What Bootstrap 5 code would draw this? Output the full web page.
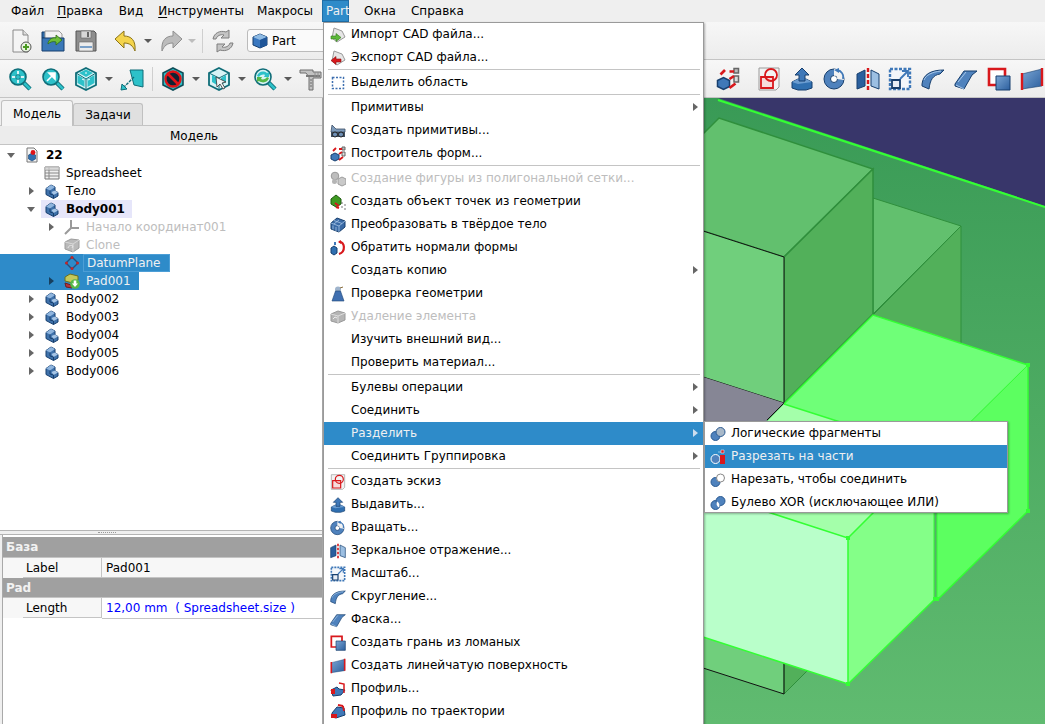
<!DOCTYPE html>
<html lang="ru"><head><meta charset="utf-8"><title>FreeCAD</title>
<link href="https://cdn.jsdelivr.net/npm/bootstrap@5.3.0/dist/css/bootstrap.min.css" rel="stylesheet">
<style>
html,body{height:100%;}
body{width:1045px;height:724px;overflow:hidden;background:#efefef;font:12px/1 "DejaVu Sans",sans-serif;color:#000;}
.defs-holder{position:absolute;width:0;height:0;}
.qbar{height:22px;background:#efefef;padding-left:3px;}
.qbar-it{height:22px;padding:0 8px;line-height:23px;white-space:nowrap;}
.qbar-it u{text-underline-offset:2px;}
.qb-a{padding-left:5px;}.qb-b{padding-right:7px;}.qb-c{padding-left:5px;}
.qbar-on{background:#2e8bc9;color:#eff0f1;border:1px solid #1f6fa8;padding:0 3px;line-height:21px;margin-left:1px;width:27px;}
.qb-d{padding-left:15px;}.qb-e{padding-left:7px;}
.qtools{height:38px;background:linear-gradient(#f7f7f7,#ececec);border-bottom:1px solid #c4c4c4;}
.t1{padding-left:8px;}
.t2{padding-left:4px;}
.tbi{width:32px;height:26px;display:flex;align-items:center;justify-content:center;flex:none;}
.tbs{width:26px;}
.tbr{width:32.8px;}
.tbi svg{width:24px;height:24px;}
.ddm{width:14px;display:flex;justify-content:center;flex:none;}
.ddm::after{content:"";border:4px solid transparent;border-top:4px solid #5a5a5a;border-bottom:0;}
.ddm-off::after{border-top-color:#bdbdbd;}
.tsep{width:1px;height:24px;background:#cfcfcf;margin:0 4px;flex:none;}
.tsep-a{margin:0 3px;}
.ml1{margin-left:1px}.ml2{margin-left:2px}.ml3{margin-left:3px}.ml4{margin-left:4px}.ml6{margin-left:6px}.ml7{margin-left:7px}.ml14{margin-left:14px}
.combo{height:23px;width:90px;margin-left:11px;border:1px solid #bbb;border-radius:3px;background:#fafafa;padding-left:4px;gap:4px;font-size:12px;flex:none;}
.combo svg{width:16px;height:16px;}
.rgroup{margin-right:-3px;}
.rfirst{margin-right:8px;}
.stage{height:626px;}
.lpanel{width:323px;flex:none;background:#efefef;border-right:1px solid #a9a9a9;}
.qtabs{height:28px;padding:2px 0 0 1px;border-bottom:1px solid #c4c4c4;}
.qtab{padding:0 11px;background:#e0e0e0;border:1px solid #c0c0c0;border-bottom:0;border-radius:3px 3px 0 0;margin-top:3px;height:22px;line-height:23px;}
.qtab-on{background:#f4f4f4;margin-top:0;height:26px;line-height:27px;margin-bottom:-1px;}
.qhead{height:19px;line-height:20px;padding-left:170px;background:#ececec;border-bottom:1px solid #c4c4c4;}
.qtree{height:385px;background:#fff;padding-top:1px;}
.trow{height:18px;width:fit-content;}
.lv0{padding-left:5px}.lv1{padding-left:25px}.lv2{padding-left:45px}
.tw{width:12px;display:flex;justify-content:center;flex:none;}
.tw-r::after{content:"";border:4px solid transparent;border-left:5px solid #666;border-right:0;}
.tw-d::after{content:"";border:4px solid transparent;border-top:5px solid #666;border-bottom:0;margin-top:1px;}
.tic{width:16px;height:16px;flex:none;margin-left:7px;}
.ttx{margin-left:6px;white-space:nowrap;}
.tb0{font-weight:700;}
.tgrey{color:#bdbdbd;}
.tsel{background:#2e8bc9;color:#eff0f1;margin-left:0;}
.tsel .tw-r::after{border-left-color:#173f5e;}
.tsel1{padding-left:45px;}
.tsel .ttx{margin-left:3px;padding:0 8px 0 3px;height:18px;line-height:17px;}
.tsel .ttx-box{border:1px solid #4c9ed6;background:#2e8bc9;}
.tsel .ttx-pad{padding-right:8px;line-height:18px;}
.tact{background:#e6e6fa;margin-left:-3px;padding:0 7px 0 3px;height:18px;}
.tact .tic{margin-left:0}
.qsplit{height:5px;background:#efefef;border-top:1px solid #b4b4b4;border-bottom:1px solid #b4b4b4;}
.qdots{width:18px;border-top:1px dotted #999;margin-left:-108px;}
.qprops{flex:1;background:#fff;border-left:1px solid #a9a9a9;margin-left:2px;padding-top:2px;}
.ptb{width:100%;table-layout:fixed;border-collapse:collapse;}
.ptb td{padding:2px 0 0;height:20px;line-height:17px;}
.ptb td.pk{padding:0;}
.pcol1{width:99px;}
.pgrp{background:#a0a0a0;color:#f2f2f2;font-weight:700;padding-left:3px!important;border-bottom:1px solid #c4c4c4;}
.pk{background:#f7f7f7;}
.pk div{margin-left:20px;height:20px;line-height:21px;padding-left:3px;border-bottom:1px solid #c4c4c4;border-right:1px solid #c4c4c4;background:#f7f7f7;overflow:hidden;}
.pv{background:#f7f7f7;padding-left:4px!important;border-bottom:1px solid #c4c4c4;white-space:nowrap;}
.pv2{background:#fff;color:#0000ff;}
.view3d{flex:1;background:#38366a;min-width:0;}
.view3d svg{display:block;width:722px;height:626px;}
.qmenu{display:block;position:absolute;margin:0;padding:0;border:1px solid #9a9a9a;border-radius:0;background:#fff;font-size:12px;color:#000;min-width:0;box-shadow:1px 1px 2px rgba(0,0,0,.3);}
.qm1{left:323px;top:22px;width:381px;height:704px;}
.qm2{left:704px;top:421px;width:304px;height:92px;}
.qit{display:flex;align-items:center;height:23px;padding:0 0 0 6px;color:#000;white-space:nowrap;position:relative;background:none;text-decoration:none;}
.qit svg{width:16px;height:16px;flex:none;margin-right:5px;}
.qit .noi{width:16px;flex:none;margin-right:5px;}
.qit .qtxt{line-height:23px;}
.qit.sub::after{content:"";position:absolute;right:5px;top:7px;border:4px solid transparent;border-left:5px solid #666;border-right:0;}
.qit.on,.qit.on:hover{background:#2e8bc9;color:#eff0f1;}
.qit.on::after{border-left-color:#cde;}
.qit.off{color:#bdbdbd;}
.qm2 .qit{padding-left:5px;}
.qdiv{height:2px;margin:0 3px 0 4px;border-top:1px solid #c4c4c4;opacity:1;background:#fff;}
</style></head><body>
<svg class="defs-holder" aria-hidden="true"><defs>
<linearGradient id="plane" x1="0" y1="0" x2="0" y2="1"><stop offset="0" stop-color="#399a56"/><stop offset=".5" stop-color="#4dab62"/><stop offset="1" stop-color="#60bb70"/></linearGradient>
<linearGradient id="blu" x1="0" y1="0" x2="1" y2="1"><stop offset="0" stop-color="#7ba6d4"/><stop offset="1" stop-color="#2c5f9e"/></linearGradient>
<symbol id="new" viewBox="0 0 24 24"><path d="M4 1h10l5 5v17H4z" fill="#f4f4f4" stroke="#8a8a8a"/><path d="M14 1v5h5" fill="#ddd" stroke="#8a8a8a"/><circle cx="17" cy="18" r="5" fill="#e8f3e0" stroke="#555"/><path d="M17 15v6M14 18h6" stroke="#4a9a22" stroke-width="2"/></symbol>
<symbol id="open" viewBox="0 0 24 24"><path d="M1 3h8l2 2h8v4H1z" fill="#2d6aa8" stroke="#173f6e"/><path d="M4 2h14l3 3v8H4z" fill="#f2f2f2" stroke="#999"/><path d="M1 9h22v13H1z" fill="#3a78b8" stroke="#173f6e"/><path d="M7 15c0-4 4-7 8-6V6l6 5-6 5v-3c-3-1-6 0-8 2z" fill="#6fbf3a" stroke="#2f6f12" stroke-width=".8"/></symbol>
<symbol id="save" viewBox="0 0 24 24"><path d="M2 2h18l2 2v18H2z" fill="#8e8e8e" stroke="#555"/><path d="M7 2h10v7H7z" fill="#d8d8d8" stroke="#666" stroke-width=".6"/><path d="M13 3h2v5h-2z" fill="#666"/><path d="M5 13h14v9H5z" fill="#ececec" stroke="#666" stroke-width=".6"/><path d="M6 17h12v2H6z" fill="#7aa0c8"/></symbol>
<symbol id="undo" viewBox="0 0 24 24"><path d="M1 10 10 2v5c7 0 12 4 11 15-2-5-5-8-11-8v5z" fill="#f4d44c" stroke="#8a7318"/></symbol>
<symbol id="redo" viewBox="0 0 24 24"><path d="M23 10 14 2v5C7 7 2 11 3 22c2-5 5-8 11-8v5z" fill="#bcbcbc" stroke="#8f8f8f"/></symbol>
<symbol id="refr" viewBox="0 0 24 24"><path d="M2 10C3 4 9 1 15 3l3-2v8h-8l3-3C9 5 6 7 5 10z" fill="#c4c4c4" stroke="#7f7f7f"/><path d="M22 14c-1 6-7 9-13 7l-3 2v-8h8l-3 3c4 1 7-1 8-4z" fill="#c4c4c4" stroke="#7f7f7f"/></symbol>
<symbol id="fita" viewBox="0 0 24 24"><path d="M15 15l7 7" stroke="#0f6d78" stroke-width="4.5"/><path d="M15 15l7 7" stroke="#2dc1c9" stroke-width="2.5"/><circle cx="10" cy="10" r="8" fill="#2dc1c9" stroke="#0f6d78" stroke-width="1.6"/><path d="M10 4v12M4 10h12" stroke="#d8f4f6" stroke-width="2"/><circle cx="10" cy="10" r="2.4" fill="#2dc1c9" stroke="#0f6d78" stroke-width=".8"/></symbol>
<symbol id="fits" viewBox="0 0 24 24"><path d="M15 15l7 7" stroke="#0f6d78" stroke-width="4.5"/><path d="M15 15l7 7" stroke="#2dc1c9" stroke-width="2.5"/><circle cx="10" cy="10" r="8" fill="#2dc1c9" stroke="#0f6d78" stroke-width="1.6"/><path d="M6 14l6-6M8 6h6v6z" stroke="#fff" fill="#fff" stroke-width="1.6"/></symbol>
<symbol id="cube" viewBox="0 0 24 24"><path d="M12 1l10 5v12l-10 5-10-5V6z" fill="#d8f4f6" stroke="#0f6d78" stroke-width="1.8"/><path d="M2 6l10 6 10-6M12 12v11" stroke="#0f6d78" stroke-width="1" fill="none"/><path d="M12 2.500l-7 3.500 7 4 7-4zM3.500 8l7 4v8l-7-4zM20.500 8l-7 4v8l7-4z" fill="#2dc1c9"/><path d="M12 5v2M8 12l2 1M16 12l-2 1" stroke="#fff"/></symbol>
<symbol id="pln" viewBox="0 0 24 24"><path d="M10 3h13v17l-9-2z" fill="#2dc1c9" stroke="#0f6d78"/><path d="M14 10L3 21" stroke="#0f6d78" stroke-width="1.4" stroke-dasharray="3 1"/><path d="M1 23l1-6 5 5z" fill="#2dc1c9" stroke="#0f6d78"/></symbol>
<symbol id="noen" viewBox="0 0 24 24"><path d="M12 1l10 5v12l-10 5-10-5V6z" fill="#2dc1c9" stroke="#0f4d58" stroke-width="1.6"/><circle cx="12" cy="12" r="7.5" fill="#123" stroke="#e01418" stroke-width="2.4"/><path d="M7 7l10 10" stroke="#e01418" stroke-width="2.6"/></symbol>
<symbol id="boxs" viewBox="0 0 24 24"><path d="M12 1l10 5v12l-10 5-10-5V6z" fill="#d8f4f6" stroke="#0f6d78" stroke-width="1.8"/><path d="M2 6l10 5 10-5M12 11v12" stroke="#0f6d78" fill="none"/><path d="M5 8l5 3v7l-5-3zM19 8l-5 3v7l5-3z" fill="#2dc1c9"/><path d="M9 10l10 5-4 1 3 5-2 1-3-5-3 3z" fill="#f0f4f4" stroke="#333" stroke-width=".8"/></symbol>
<symbol id="sync" viewBox="0 0 24 24"><path d="M15 15l7 7" stroke="#0f6d78" stroke-width="4.5"/><path d="M15 15l7 7" stroke="#2dc1c9" stroke-width="2.5"/><circle cx="10" cy="10" r="8" fill="#d8f4f6" stroke="#0f6d78" stroke-width="1.6"/><path d="M4 9c1-4 6-6 10-3l2-1v5h-5l1-2c-2-1-5 0-6 2z" fill="#2dc1c9"/><path d="M16 11c-1 4-6 6-10 3l-2 1v-5h5l-1 2c2 1 5 0 6-2z" fill="#55b848"/></symbol>
<symbol id="calip" viewBox="0 0 24 24"><path d="M1 3h13v2h8v6h-8v12h-4V10L7 6H1z" fill="#c2c2c2" stroke="#6e6e6e"/><path d="M7 9h14" stroke="#7a7a7a" stroke-width="2"/><path d="M11 13h2M11 16h2M11 19h2" stroke="#6e6e6e"/><path d="M16 5v6M19 5v6" stroke="#8e8e8e"/></symbol>
<symbol id="part" viewBox="0 0 16 16"><path d="M1 4l7-3 7 3v8l-7 3-7-3z" fill="#3a78c0" stroke="#173f6e"/><path d="M1 4l7 3 7-3-7-3z" fill="#8fbbe4"/><path d="M8 7v8l7-3V4z" fill="#1f5598"/></symbol>
<symbol id="doc" viewBox="0 0 16 16"><path d="M3 1h7l3 3v11H3z" fill="#f6f6f6" stroke="#777"/><path d="M4.500 8l3.500-2 3.500 2v4l-3.500 2-3.500-2z" fill="#2f6fb0" stroke="#173f6e" stroke-width=".6"/><circle cx="9" cy="5.500" r="2.400" fill="#e01418"/></symbol>
<symbol id="sheet" viewBox="0 0 16 16"><path d="M1 2h14v12H1z" fill="#f0f0f0" stroke="#777"/><path d="M1 5h14M1 8h14M1 11h14M5 2v12" stroke="#888"/><path d="M1 2h14v3H1z" fill="#cfcfcf" opacity=".7"/></symbol>
<symbol id="body" viewBox="0 0 16 16"><path d="M2 5.500 7 2l4 2v4l3 1.500V13l-4.500 2.500L2 11.500z" fill="#3f72ab" stroke="#173f6e"/><path d="M2 5.500 7 2l4 2-5 3.500z" fill="#8fb5de"/><path d="M7.500 9 11 7.500l3 2-4.500 2.500z" fill="#a6c5e6"/><path d="M6 7.500v3.500l3.500 1v3.500" stroke="#173f6e" fill="none"/></symbol>
<symbol id="orig" viewBox="0 0 16 16"><path d="M7 1v8l-6 6M7 9h8" stroke="#9a9a9a" stroke-width="2" fill="none"/></symbol>
<symbol id="clone" viewBox="0 0 16 16"><path d="M1 5l6-3 8 1v8l-6 4-8-3z" fill="#b9b9b9" stroke="#9c9c9c"/><path d="M1 5l8 2 6-4M9 7v8" stroke="#d8d8d8" fill="none"/><path d="M4 11c1-3 3-3 5-2l-1 2" stroke="#e6e6e6" fill="none"/></symbol>
<symbol id="dplane" viewBox="0 0 16 16"><path d="M8 2l6 6-6 6-6-6z" fill="none" stroke="#26507e" stroke-width="1.400"/><g fill="#c0262a"><circle cx="8" cy="2.500" r="1.500"/><circle cx="13.500" cy="8" r="1.500"/><circle cx="8" cy="13.500" r="1.500"/><circle cx="2.500" cy="8" r="1.500"/></g></symbol>
<symbol id="pad" viewBox="0 0 16 16"><path d="M1 4l5-3 8 2v4l-5 3-8-2z" fill="#c5c95a" stroke="#6a7020"/><path d="M1 10l6 2 1 3-6-1z" fill="#b7333a" stroke="#6e1d20"/><circle cx="11" cy="11" r="4.800" fill="#55b848"/><path d="M9.700 7.500h2.600v3h1.800L11 14l-3.100-3.500h1.800z" fill="#fff"/></symbol>
<symbol id="imp" viewBox="0 0 16 16"><path d="M4 1l8 3 3 6-8 5-5-4z" fill="#e6e6e6" stroke="#9a9a9a"/><path d="M1 9h5V6.500l5 4-5 4V12H1z" fill="#5cb83a" stroke="#2f7a15" stroke-width=".6"/></symbol>
<symbol id="exp" viewBox="0 0 16 16"><path d="M4 1l8 3 3 6-8 5-5-4z" fill="#e6e6e6" stroke="#9a9a9a"/><path d="M11 9H6V6.500l-5 4 5 4V12h5z" fill="#d8181c" stroke="#8a1012" stroke-width=".6"/></symbol>
<symbol id="bsel" viewBox="0 0 16 16"><path d="M2.500 2.500h11v11h-11z" fill="none" stroke="#3e6fb0" stroke-width="1.500" stroke-dasharray="2 1.500"/></symbol>
<symbol id="prim" viewBox="0 0 16 16"><path d="M2 2l4 4h9v3H1z" fill="#7c9abb" stroke="#3c4e66" stroke-width=".8"/><path d="M1 9h14v5H1z" fill="#3e4e60"/><circle cx="5" cy="11.500" r="2.500" fill="#6e8fb5" stroke="#222"/><circle cx="11" cy="11.500" r="2.500" fill="#6e8fb5" stroke="#222"/></symbol>
<symbol id="shape" viewBox="0 0 16 16"><path d="M1 9l4-2 4 2v4l-4 2-4-2z" fill="#3f78b8" stroke="#173f6e"/><path d="M12 6h3v4h-3z" fill="#ddd" stroke="#666"/><path d="M12 1h3v3h-3z" fill="#bbb" stroke="#666"/><path d="M3 5l3-3M9 3h3M9 8l3-2" stroke="#d8181c" stroke-width="1.800"/><path d="M9 14l4-3" stroke="#d8181c" stroke-width="1.800"/></symbol>
<symbol id="mesh" viewBox="0 0 16 16"><circle cx="5" cy="5" r="3.800" fill="#bdbdbd" stroke="#999"/><path d="M8 8l4-2 4 2v5l-4 2-4-2z" fill="#c9c9c9" stroke="#9c9c9c"/><circle cx="4.500" cy="10.500" r="2.500" fill="#b5b5b5"/></symbol>
<symbol id="pts" viewBox="0 0 16 16"><path d="M1 5l5-4 5 4v5l-5 3-5-3z" fill="#3f9a22" stroke="#1f5a10"/><path d="M5 9l4 3M9 14l-3-1" stroke="#d8181c" stroke-width="2"/><g fill="#666"><circle cx="12" cy="9" r=".8"/><circle cx="15" cy="11" r=".8"/><circle cx="12" cy="13" r=".8"/><circle cx="15" cy="15" r=".8"/></g></symbol>
<symbol id="solid" viewBox="0 0 16 16"><path d="M1 6l6-5 8 3v6l-6 5-8-3z" fill="#3a6aa6" stroke="#173f6e"/><path d="M1 6l8 3 6-5M9 9v6M4 3.500l8 3M3 8.500v4M6 10v4M4 7l5-4" stroke="#a7c5e6" stroke-width=".8" fill="none"/></symbol>
<symbol id="rev" viewBox="0 0 16 16"><path d="M1 8l3-2 3 2v5l-3 2-3-2z" fill="#2f6fb0" stroke="#173f6e"/><path d="M4 2h2v3H4z" fill="#3f78b8"/><path d="M9 2c6-1 7 10 0 12" fill="none" stroke="#d8181c" stroke-width="2.200"/><path d="M11 0l-3 2 3 2z" fill="#d8181c"/></symbol>
<symbol id="chk" viewBox="0 0 16 16"><circle cx="8" cy="3.500" r="3" fill="#9fb4cc"/><path d="M5.500 5h5L14 15H2z" fill="#3f6fb0" stroke="#1d4577" stroke-width=".6"/><path d="M10 2l3-1" stroke="#8a6d3b"/></symbol>
<symbol id="del" viewBox="0 0 16 16"><path d="M1 5l7-3 7 2v7l-7 3-7-2z" fill="#b5b5b5" stroke="#999"/><path d="M1 5l7 2 7-3M8 7v7" stroke="#ddd" fill="none"/><path d="M3 10l2-2 2 1" stroke="#eee" fill="none"/></symbol>
<symbol id="sk" viewBox="0 0 24 24"><path d="M2 1h20v19l-3 3H2z" fill="#f3f3f3" stroke="#9a9a9a"/><path d="M4 10h12v11H4z" fill="#f7dcdc" stroke="#d8181c" stroke-width="1.800"/><circle cx="14" cy="8" r="6" fill="none" stroke="#d8181c" stroke-width="1.800"/></symbol>
<symbol id="ext" viewBox="0 0 24 24"><path d="M2 15l6-3h8l6 3v6l-6 2H8l-6-2z" fill="#2f6fb0" stroke="#173f6e"/><path d="M2 15l6 2 14-2-6-3H8z" fill="#6b9cd0"/><path d="M12 1l7 7h-4v6H9V8H5z" fill="#3f78b8" stroke="#173f6e"/></symbol>
<symbol id="rvl" viewBox="0 0 24 24"><circle cx="11" cy="12" r="10" fill="#4f82bd" stroke="#173f6e"/><circle cx="11" cy="12" r="3.500" fill="#fff" stroke="#173f6e"/><path d="M11 2c6 0 11 4 10 11l-7-1c1-2-1-4-3-3z" fill="#f2f2f2"/><path d="M14 3c5 1 7 5 6 9" fill="none" stroke="#3f78b8" stroke-width="1.800"/><path d="M11 3l5-2v5z" fill="#3f78b8"/></symbol>
<symbol id="mir" viewBox="0 0 24 24"><path d="M1 7l8-4v16l-8 3z" fill="#2a5f9e" stroke="#173f6e"/><path d="M23 7l-8-4v16l8 3z" fill="#9cbfe2" stroke="#173f6e"/><path d="M12 1v22" stroke="#d8181c" stroke-width="2.400" stroke-dasharray="4 2"/></symbol>
<symbol id="scl" viewBox="0 0 24 24"><path d="M2 2h20v20H2z" fill="#f3f6fa" stroke="#3f78b8" stroke-width="2.400" stroke-dasharray="3 1.500"/><path d="M4 13h8v8H4z" fill="#e8eef6" stroke="#173f6e" stroke-width="1.800"/><path d="M12 12l7-7M14 4h6v6" fill="none" stroke="#3f78b8" stroke-width="1.800"/></symbol>
<symbol id="fil" viewBox="0 0 24 24"><path d="M1 17C2 8 9 3 23 3l-4 4C12 8 9 13 8 22l-7-3z" fill="#4f82bd" stroke="#173f6e"/><path d="M3 13C5 8 11 5 20 4" stroke="#a8c8ea" fill="none"/></symbol>
<symbol id="chm" viewBox="0 0 24 24"><path d="M1 17L10 4h13l-5 4-8 14-9-3z" fill="#4f82bd" stroke="#173f6e"/><path d="M4 15l8-10M10 22l-8-4" stroke="#a8c8ea" fill="none"/></symbol>
<symbol id="fce" viewBox="0 0 24 24"><path d="M2 2h16v16H2z" fill="#fff" stroke="#d8181c" stroke-width="2.600"/><path d="M9 9h14v14H9z" fill="url(#blu)" stroke="#173f6e"/></symbol>
<symbol id="rul" viewBox="0 0 24 24"><path d="M2 7l20-5v17L2 22z" fill="url(#blu)" stroke="#173f6e" stroke-width=".6"/><path d="M2 6v17M22 1v18" stroke="#d8181c" stroke-width="2.400"/></symbol>
<symbol id="swp" viewBox="0 0 16 16"><path d="M1 9l6-3 2 2 6 1-4 5-8 1z" fill="#3f78b8" stroke="#173f6e"/><path d="M1 8h4v5H1z" fill="#d8181c"/><path d="M9 2l5 1v9" fill="none" stroke="#d8181c" stroke-width="1.500"/></symbol>
<symbol id="sw2" viewBox="0 0 16 16"><path d="M2 9L7 3l7 1 1 7-9 3-4-1z" fill="#3f78b8" stroke="#173f6e"/><path d="M1 10h6v4H1z" fill="#d8181c"/><path d="M13 2l1 5M8 1l5 1" stroke="#d8181c" stroke-width="1.800"/></symbol>
<symbol id="bfrag" viewBox="0 0 16 16"><circle cx="5.500" cy="10" r="4.500" fill="#4f82bd" stroke="#2a5a92"/><circle cx="10.500" cy="6" r="4.500" fill="#a8b8c8" stroke="#2a5a92"/></symbol>
<symbol id="bcut" viewBox="0 0 16 16"><circle cx="5.500" cy="10" r="4.500" fill="#4f82bd" stroke="#fff"/><path d="M10 6h5v9h-5z" fill="#d8181c"/><path d="M11 1h3v3h-3zM8 3h3" fill="#d8181c" stroke="#fff" stroke-width=".5"/></symbol>
<symbol id="bjoin" viewBox="0 0 16 16"><circle cx="5.500" cy="10" r="4.500" fill="#4f82bd" stroke="#2a5a92"/><circle cx="10.500" cy="6" r="4" fill="#fff" stroke="#888"/></symbol>
<symbol id="bxor" viewBox="0 0 16 16"><circle cx="5.500" cy="10" r="4.500" fill="#4f82bd" stroke="#2a5a92"/><circle cx="10.500" cy="6" r="4.500" fill="#4f82bd" stroke="#2a5a92"/><path d="M7 6.500a4.500 4.500 0 0 1 2 6a4.500 4.500 0 0 1-2-6" fill="#fff"/></symbol>
</defs></svg>

<div class="qbar d-flex">
<span class="qbar-it">Файл</span><span class="qbar-it qb-a"><u>П</u>равка</span><span class="qbar-it qb-b">Вид</span><span class="qbar-it"><u>И</u>нструменты</span><span class="qbar-it qb-c">Макросы</span><span class="qbar-it qbar-on">Part</span><span class="qbar-it qb-d">Окна</span><span class="qbar-it qb-e">Справка</span>
</div>
<div class="qtools t1 d-flex align-items-center">
<span class="tbi tbs"><svg><use href="#new"/></svg></span><span class="tbi tbs ml6"><svg><use href="#open"/></svg></span><span class="tbi tbs ml7"><svg><use href="#save"/></svg></span>
<span class="tbi tbs ml14"><svg><use href="#undo"/></svg></span><span class="ddm ml2"></span><span class="tbi tbs ml3"><svg><use href="#redo"/></svg></span><span class="ddm ml1 ddm-off"></span><span class="tsep tsep-a"></span><span class="tbi tbs ml4"><svg><use href="#refr"/></svg></span>
<span class="combo d-flex align-items-center"><svg><use href="#part"/></svg>Part</span>
</div>
<div class="qtools t2 d-flex align-items-center justify-content-between">
<div class="d-flex align-items-center">
<span class="tbi"><svg><use href="#fita"/></svg></span><span class="tbi ml1"><svg><use href="#fits"/></svg></span><span class="tbi ml1"><svg><use href="#cube"/></svg></span><span class="ddm"></span><span class="tbi"><svg><use href="#pln"/></svg></span><span class="tsep"></span><span class="tbi"><svg><use href="#noen"/></svg></span><span class="ddm"></span><span class="tbi"><svg><use href="#boxs"/></svg></span><span class="ddm"></span><span class="tbi"><svg><use href="#sync"/></svg></span><span class="ddm"></span><span class="tbi"><svg><use href="#calip"/></svg></span>
</div>
<div class="d-flex align-items-center rgroup">
<span class="tbi tbr rfirst"><svg><use href="#shape"/></svg></span><span class="tbi tbr"><svg><use href="#sk"/></svg></span><span class="tbi tbr"><svg><use href="#ext"/></svg></span><span class="tbi tbr"><svg><use href="#rvl"/></svg></span><span class="tbi tbr"><svg><use href="#mir"/></svg></span><span class="tbi tbr"><svg><use href="#scl"/></svg></span><span class="tbi tbr"><svg><use href="#fil"/></svg></span><span class="tbi tbr"><svg><use href="#chm"/></svg></span><span class="tbi tbr"><svg><use href="#fce"/></svg></span><span class="tbi tbr"><svg><use href="#rul"/></svg></span>
</div>
</div>

<div class="stage d-flex">
<aside class="lpanel d-flex flex-column">
<div class="qtabs d-flex"><span class="qtab qtab-on">Модель</span><span class="qtab">Задачи</span></div>
<div class="qhead">Модель</div>
<div class="qtree">
<div class="trow lv0 d-flex align-items-center"><span class="tw tw-d"></span><svg class="tic"><use href="#doc"/></svg><span class="ttx tb0">22</span></div>
<div class="trow lv1 d-flex align-items-center"><span class="tw"></span><svg class="tic"><use href="#sheet"/></svg><span class="ttx">Spreadsheet</span></div>
<div class="trow lv1 d-flex align-items-center"><span class="tw tw-r"></span><svg class="tic"><use href="#body"/></svg><span class="ttx">Тело</span></div>
<div class="trow lv1 d-flex align-items-center"><span class="tw tw-d"></span><span class="tact d-flex align-items-center ms-1"><svg class="tic"><use href="#body"/></svg><span class="ttx tb0">Body001</span></span></div>
<div class="trow lv2 d-flex align-items-center tgrey"><span class="tw tw-r"></span><svg class="tic"><use href="#orig"/></svg><span class="ttx">Начало координат001</span></div>
<div class="trow lv2 d-flex align-items-center tgrey"><span class="tw"></span><svg class="tic"><use href="#clone"/></svg><span class="ttx">Clone</span></div>
<div class="trow lv2 d-flex align-items-center tsel tsel1"><span class="tw"></span><svg class="tic"><use href="#dplane"/></svg><span class="ttx ttx-box">DatumPlane</span></div>
<div class="trow lv2 d-flex align-items-center tsel tsel1"><span class="tw tw-r"></span><svg class="tic"><use href="#pad"/></svg><span class="ttx ttx-pad">Pad001</span></div>
<div class="trow lv1 d-flex align-items-center"><span class="tw tw-r"></span><svg class="tic"><use href="#body"/></svg><span class="ttx">Body002</span></div>
<div class="trow lv1 d-flex align-items-center"><span class="tw tw-r"></span><svg class="tic"><use href="#body"/></svg><span class="ttx">Body003</span></div>
<div class="trow lv1 d-flex align-items-center"><span class="tw tw-r"></span><svg class="tic"><use href="#body"/></svg><span class="ttx">Body004</span></div>
<div class="trow lv1 d-flex align-items-center"><span class="tw tw-r"></span><svg class="tic"><use href="#body"/></svg><span class="ttx">Body005</span></div>
<div class="trow lv1 d-flex align-items-center"><span class="tw tw-r"></span><svg class="tic"><use href="#body"/></svg><span class="ttx">Body006</span></div>
</div>
<div class="qsplit d-flex justify-content-center align-items-center"><span class="qdots"></span></div>
<div class="qprops">
<table class="ptb"><colgroup><col class="pcol1"><col></colgroup><tbody>
<tr><td colspan="2" class="pgrp">База</td></tr>
<tr><td class="pk"><div>Label</div></td><td class="pv">Pad001</td></tr>
<tr><td colspan="2" class="pgrp">Pad</td></tr>
<tr><td class="pk"><div>Length</div></td><td class="pv pv2">12,00 mm &nbsp;( Spreadsheet.size )</td></tr>
</tbody></table>
</div>
</aside>
<main class="view3d">
<svg viewBox="323 98 722 626" preserveAspectRatio="none" role="img" aria-label="3D-вид">
<rect x="323" y="98" width="722" height="626" fill="#38366a"/>
<path d="M700 98H718L1045 206V724H700Z" fill="url(#plane)"/>
<path d="M718 100 1045 207" stroke="#33ff33" stroke-width="2"/>
<path d="M873 198 961 226 873 314Z" fill="#62c06e" stroke="#2f8f3c"/>
<path d="M961 226V345L873 315Z" fill="#52b05a" stroke="#2f8f3c"/>
<path d="M700 137 719 118 873 169 784 257 700 230Z" fill="#62c06e" stroke="#2f8f3c" stroke-width="1.500"/>
<path d="M873 169V314L784 403V257Z" fill="#52b05a" stroke="#2f8f3c" stroke-width="1.500"/>
<path d="M700 230 784 257V403L700 376Z" fill="#70cf7c"/>
<path d="M700 230 784 257V403L700 376" fill="none" stroke="#111" stroke-width="1"/>
<path d="M700 376 784 403 700 488Z" fill="#868695"/>
<path d="M784 403 767 420" stroke="#111"/>
<path d="M700 636 784 663V694L700 667Z" fill="#70cf7c"/>
<path d="M784 663V694L808 670Z" fill="#52b05a" stroke="#2f8f3c"/>
<path d="M700 667 784 694V663" fill="none" stroke="#111"/>
<path d="M873 315 1028 365 937 455 784 404Z" fill="#6fff78"/>
<path d="M1028 365V511L937 600V455Z" fill="#5cff60"/>
<path d="M784 404 934 452 848 538 700 490Z" fill="#a4ffaa"/>
<path d="M934 452V600L848 684V538Z" fill="#84ff88"/>
<path d="M700 490 848 538V684L700 636Z" fill="#b9ffca"/>
<g fill="none" stroke="#33ff33" stroke-width="1.500">
<path d="M784 404 873 315 1028 365 1028 511 937 600H934L848 684 700 636"/>
<path d="M848 684V538L700 490"/>
<path d="M784 404 934 452 848 538"/>
<path d="M934 452V600M937 455V600M937 455 1028 365" stroke-width="1"/>
</g>
<g fill="#33ff33"><rect x="1026" y="363" width="4" height="4"/><rect x="1026" y="509" width="4" height="4"/><rect x="846" y="536" width="4" height="4"/><rect x="846" y="682" width="4" height="4"/><rect x="933" y="597" width="6" height="4"/></g>
</svg>
</main>
</div>

<div class="dropdown-menu show qmenu qm1">
<a class="qit"><svg><use href="#imp"/></svg><span class="qtxt">Импорт CAD файла...</span></a>
<a class="qit"><svg><use href="#exp"/></svg><span class="qtxt">Экспорт CAD файла...</span></a>
<hr class="qdiv">
<a class="qit"><svg><use href="#bsel"/></svg><span class="qtxt">Выделить область</span></a>
<hr class="qdiv">
<a class="qit sub"><span class="noi"></span><span class="qtxt">Примитивы</span></a>
<a class="qit"><svg><use href="#prim"/></svg><span class="qtxt">Создать примитивы...</span></a>
<a class="qit"><svg><use href="#shape"/></svg><span class="qtxt">Построитель форм...</span></a>
<hr class="qdiv">
<a class="qit off"><svg><use href="#mesh"/></svg><span class="qtxt">Создание фигуры из полигональной сетки...</span></a>
<a class="qit"><svg><use href="#pts"/></svg><span class="qtxt">Создать объект точек из геометрии</span></a>
<a class="qit"><svg><use href="#solid"/></svg><span class="qtxt">Преобразовать в твёрдое тело</span></a>
<a class="qit"><svg><use href="#rev"/></svg><span class="qtxt">Обратить нормали формы</span></a>
<a class="qit sub"><span class="noi"></span><span class="qtxt">Создать копию</span></a>
<a class="qit"><svg><use href="#chk"/></svg><span class="qtxt">Проверка геометрии</span></a>
<a class="qit off"><svg><use href="#del"/></svg><span class="qtxt">Удаление элемента</span></a>
<a class="qit"><span class="noi"></span><span class="qtxt">Изучить внешний вид...</span></a>
<a class="qit"><span class="noi"></span><span class="qtxt">Проверить материал...</span></a>
<hr class="qdiv">
<a class="qit sub"><span class="noi"></span><span class="qtxt">Булевы операции</span></a>
<a class="qit sub"><span class="noi"></span><span class="qtxt">Соединить</span></a>
<a class="qit sub on"><span class="noi"></span><span class="qtxt">Разделить</span></a>
<a class="qit sub"><span class="noi"></span><span class="qtxt">Соединить Группировка</span></a>
<hr class="qdiv">
<a class="qit"><svg><use href="#sk"/></svg><span class="qtxt">Создать эскиз</span></a>
<a class="qit"><svg><use href="#ext"/></svg><span class="qtxt">Выдавить...</span></a>
<a class="qit"><svg><use href="#rvl"/></svg><span class="qtxt">Вращать...</span></a>
<a class="qit"><svg><use href="#mir"/></svg><span class="qtxt">Зеркальное отражение...</span></a>
<a class="qit"><svg><use href="#scl"/></svg><span class="qtxt">Масштаб...</span></a>
<a class="qit"><svg><use href="#fil"/></svg><span class="qtxt">Скругление...</span></a>
<a class="qit"><svg><use href="#chm"/></svg><span class="qtxt">Фаска...</span></a>
<a class="qit"><svg><use href="#fce"/></svg><span class="qtxt">Создать грань из ломаных</span></a>
<a class="qit"><svg><use href="#rul"/></svg><span class="qtxt">Создать линейчатую поверхность</span></a>
<a class="qit"><svg><use href="#swp"/></svg><span class="qtxt">Профиль...</span></a>
<a class="qit"><svg><use href="#sw2"/></svg><span class="qtxt">Профиль по траектории</span></a>
</div>
<div class="dropdown-menu show qmenu qm2">
<a class="qit"><svg><use href="#bfrag"/></svg><span class="qtxt">Логические фрагменты</span></a>
<a class="qit on"><svg><use href="#bcut"/></svg><span class="qtxt">Разрезать на части</span></a>
<a class="qit"><svg><use href="#bjoin"/></svg><span class="qtxt">Нарезать, чтобы соединить</span></a>
<a class="qit"><svg><use href="#bxor"/></svg><span class="qtxt">Булево XOR (исключающее ИЛИ)</span></a>
</div>
<script src="https://cdn.jsdelivr.net/npm/bootstrap@5.3.0/dist/js/bootstrap.bundle.min.js"></script>
</body></html>
